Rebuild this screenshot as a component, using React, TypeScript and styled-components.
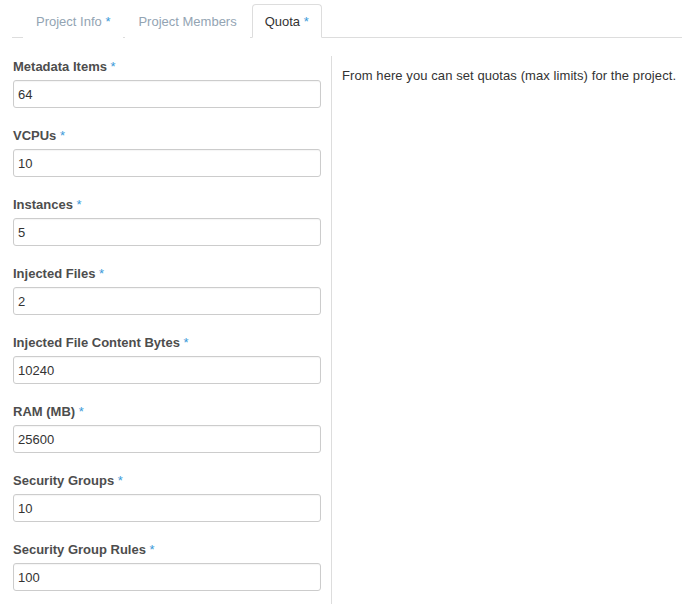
import styled, { createGlobalStyle } from 'styled-components';

const GlobalStyle = createGlobalStyle`
  body {
    margin: 0;
    background: #fff;
    font-family: "Liberation Sans", Arial, sans-serif;
    font-size: 13px;
    color: #333;
  }
`;

interface QuotaField {
  label: string;
  value: string;
}

const fields: QuotaField[] = [
  { label: 'Metadata Items', value: '64' },
  { label: 'VCPUs', value: '10' },
  { label: 'Instances', value: '5' },
  { label: 'Injected Files', value: '2' },
  { label: 'Injected File Content Bytes', value: '10240' },
  { label: 'RAM (MB)', value: '25600' },
  { label: 'Security Groups', value: '10' },
  { label: 'Security Group Rules', value: '100' },
];

const tabs = [
  { name: 'Project Info', required: true },
  { name: 'Project Members', required: false },
  { name: 'Quota', required: true, active: true },
];

const App = () => {
  return (
    <Page>
      <GlobalStyle />
      <TabList>
        {tabs.map((tab) => (
          <Tab key={tab.name} $active={!!tab.active}>
            {tab.name}
            {tab.required && <Required> *</Required>}
          </Tab>
        ))}
      </TabList>
      <Body>
        <FormColumn>
          {fields.map((field) => (
            <FormGroup key={field.label}>
              <Label>
                {field.label}
                <Required> *</Required>
              </Label>
              <Input type='number' defaultValue={field.value} />
            </FormGroup>
          ))}
        </FormColumn>
        <HelpColumn>
          <p>From here you can set quotas (max limits) for the project.</p>
        </HelpColumn>
      </Body>
    </Page>
  );
};

const Page = styled.div`
  padding: 4px 14px 0 12px;
`;

const TabList = styled.ul`
  display: flex;
  list-style: none;
  margin: 0;
  padding: 0 0 0 11px;
  border-bottom: 1px solid #ddd;
  height: 33px;
`;

const Tab = styled.li<{ $active: boolean }>`
  box-sizing: border-box;
  height: 34px;
  padding: 0 12px;
  margin-right: 2px;
  line-height: 33px;
  font-size: 13px;
  color: ${({ $active }) => ($active ? '#333' : '#93a4b3')};
  background: #fff;
  border: 1px solid ${({ $active }) => ($active ? '#ddd' : 'transparent')};
  border-bottom-color: ${({ $active }) => ($active ? '#fff' : 'transparent')};
  border-radius: 4px 4px 0 0;
  cursor: pointer;
`;

const Required = styled.span`
  color: #3a9ad9;
  font-weight: normal;
`;

const Body = styled.div`
  display: flex;
  margin-top: 18px;
`;

const FormColumn = styled.div`
  width: 308px;
  padding: 2px 10px 0 1px;
`;

const FormGroup = styled.div`
  margin-bottom: 19px;

  &:last-child {
    margin-bottom: 13px;
  }
`;

const Label = styled.label`
  display: block;
  font-weight: bold;
  line-height: 18px;
  margin-bottom: 4px;
  color: #4d4d4d;
`;

const Input = styled.input`
  display: block;
  box-sizing: border-box;
  width: 100%;
  height: 28px;
  padding: 0 4px;
  border: 1px solid #ccc;
  border-radius: 3px;
  font-family: inherit;
  font-size: 13px;
  color: #333;
  box-shadow: inset 0 1px 1px rgba(0, 0, 0, 0.04);
  appearance: textfield;
  -moz-appearance: textfield;

  &::-webkit-inner-spin-button,
  &::-webkit-outer-spin-button {
    -webkit-appearance: none;
    margin: 0;
  }
`;

const HelpColumn = styled.div`
  flex: 1;
  border-left: 1px solid #ddd;
  padding: 11px 0 0 10px;

  p {
    margin: 0;
    line-height: 18px;
    letter-spacing: 0.08px;
  }
`;

export default App;
